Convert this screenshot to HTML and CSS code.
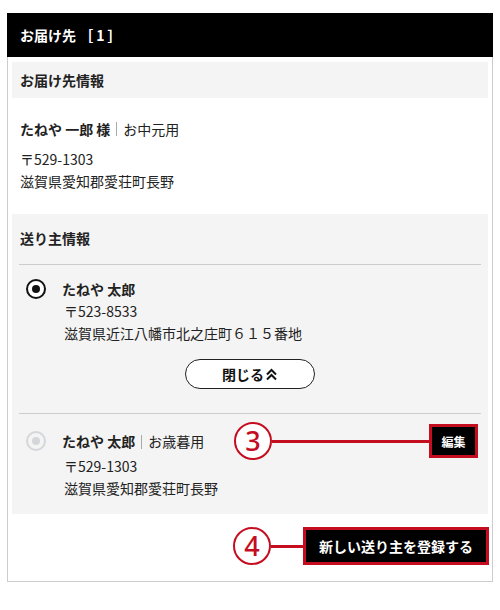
FILE: index.html
```html
<!DOCTYPE html>
<html lang="ja">
<head>
  <meta charset="UTF-8" />
  <meta name="viewport" content="width=device-width, initial-scale=1.0"/>
  <title>お届け先</title>
  <link rel="stylesheet" href="styles.css">
</head>
<body>
  <div class="delivery">
    <h2 class="delivery-head">お届け先 ［<span class="no">1</span>］</h2>
    <div class="delivery-body">
      <div class="section-title">お届け先情報</div>
      <div class="address">
        <div class="name-row"><b>たねや 一郎 様</b><span class="sep"></span>お中元用</div>
        <div class="line">〒529-1303</div>
        <div class="line">滋賀県愛知郡愛荘町長野</div>
      </div>

      <div class="sender">
        <div class="sender-title">送り主情報</div>

        <div class="sender-item">
          <span class="radio checked"></span>
          <div class="sender-info">
            <div class="name-row"><b>たねや 太郎</b></div>
            <div class="line">〒523-8533</div>
            <div class="line">滋賀県近江八幡市北之庄町６１５番地</div>
          </div>
        </div>
        <div class="toggle-row">
          <button class="toggle">閉じる
            <svg width="13" height="13" viewBox="0 0 13 13"><path d="M2 6.5 L6.5 2 L11 6.5 M2 11.5 L6.5 7 L11 11.5" fill="none" stroke="#111" stroke-width="2"/></svg>
          </button>
        </div>

        <div class="sender-item second">
          <span class="radio disabled"></span>
          <div class="sender-info">
            <div class="name-row">
              <div><b>たねや 太郎</b><span class="sep"></span>お歳暮用</div>
              <div class="marked">
                <span class="callout long"><span class="num">3</span><span class="bar"></span></span>
                <button class="edit">編集</button>
              </div>
            </div>
            <div class="line">〒529-1303</div>
            <div class="line">滋賀県愛知郡愛荘町長野</div>
          </div>
        </div>
      </div>

      <div class="actions">
        <div class="marked">
          <span class="callout short"><span class="num">4</span><span class="bar"></span></span>
          <button class="register">新しい送り主を登録する</button>
        </div>
      </div>
    </div>
  </div>
</body>
</html>
```

FILE: styles.css
```css
body {
  margin: 0;
  background: #fff;
  color: #222;
  font-family: "Noto Sans CJK JP", "Noto Sans", sans-serif;
  font-size: 14px;
}
.delivery {
  width: 486px;
  margin: 13px 0 0 7px;
}
.delivery-head {
  margin: 0;
  height: 44px;
  line-height: 44px;
  padding-left: 13px;
  background: #000;
  color: #fff;
  font-size: 14px;
  font-weight: bold;
}
.delivery-head .no {
  margin: 0 3px;
}
.delivery-body {
  border: 1px solid #ccc;
  border-top: none;
  padding: 5px 4px 19px 4px;
}
.section-title {
  background: #f4f4f4;
  height: 36px;
  line-height: 36px;
  padding-left: 8px;
  font-weight: bold;
}
.address {
  padding: 20px 8px 22px 8px;
}
.address .name-row {
  margin-bottom: 8px;
}
.name-row {
  line-height: 22px;
  display: flex;
  align-items: center;
}
.name-row b {
  font-weight: bold;
}
.line {
  line-height: 22px;
}
.sep {
  display: inline-block;
  width: 1px;
  height: 14px;
  background: #aaa;
  margin: 0 6px;
  vertical-align: -2px;
}
.sender {
  background: #f4f4f4;
  padding: 13px 7px 15px 7px;
}
.sender-title {
  line-height: 22px;
  padding-left: 1px;
  font-weight: bold;
  padding-bottom: 15px;
  border-bottom: 1px solid #ccc;
}
.sender-item {
  display: flex;
  align-items: flex-start;
  gap: 16px;
  padding: 13px 6px 0 7px;
}
.sender-item.second {
  border-top: 1px solid #ccc;
}
.sender-item.second .name-row {
  justify-content: space-between;
  height: 28px;
}
.sender-info {
  flex: 1;
}
.sender-info .line {
  padding-left: 2px;
}
.radio {
  width: 20px;
  height: 20px;
  box-sizing: border-box;
  border-radius: 50%;
  border: 2px solid #111;
  display: flex;
  align-items: center;
  justify-content: center;
  flex-shrink: 0;
  margin-top: 1px;
  background: #fff;
}
.radio::after {
  content: "";
  width: 8px;
  height: 8px;
  border-radius: 50%;
  background: #111;
}
.radio.disabled {
  border-color: #d4d6da;
  background: #f4f4f4;
  margin-top: 4px;
}
.radio.disabled::after {
  background: #d4d6da;
}
.toggle-row {
  display: flex;
  justify-content: center;
  padding: 15px 0 24px 0;
}
.toggle {
  width: 130px;
  height: 30px;
  border: 1px solid #222;
  border-radius: 15px;
  background: #fff;
  color: #111;
  font-family: inherit;
  font-size: 14px;
  font-weight: bold;
  display: flex;
  align-items: center;
  justify-content: center;
  gap: 1px;
  padding: 0;
}
.marked {
  position: relative;
  display: flex;
}
.edit {
  width: 43px;
  height: 28px;
  background: #000;
  color: #fff;
  border: none;
  outline: 3px solid #c40d1f;
  font-family: inherit;
  font-size: 12px;
  font-weight: bold;
  padding: 0;
}
.actions {
  display: flex;
  justify-content: flex-end;
  padding: 16px 2px 0 0;
}
.register {
  width: 180px;
  height: 32px;
  background: #000;
  color: #fff;
  border: none;
  outline: 3px solid #c40d1f;
  font-family: inherit;
  font-size: 14px;
  font-weight: bold;
  padding: 0;
}
/* annotation callouts */
.callout {
  position: absolute;
  top: 50%;
  display: flex;
  align-items: center;
  transform: translateY(-50%);
}
.callout.long { right: 46px; }
.callout.short { right: 183px; }
.callout .num {
  width: 34px;
  height: 34px;
  border: 2px solid #c40d1f;
  border-radius: 50%;
  background: #fff;
  color: #c40d1f;
  font-family: "Noto Sans", sans-serif;
  font-weight: 500;
  font-size: 27px;
  line-height: 34px;
  text-align: center;
}
.callout .bar {
  height: 3px;
  background: #c40d1f;
}
.callout.long .bar { width: 157px; }
.callout.short .bar { width: 32px; }
```
